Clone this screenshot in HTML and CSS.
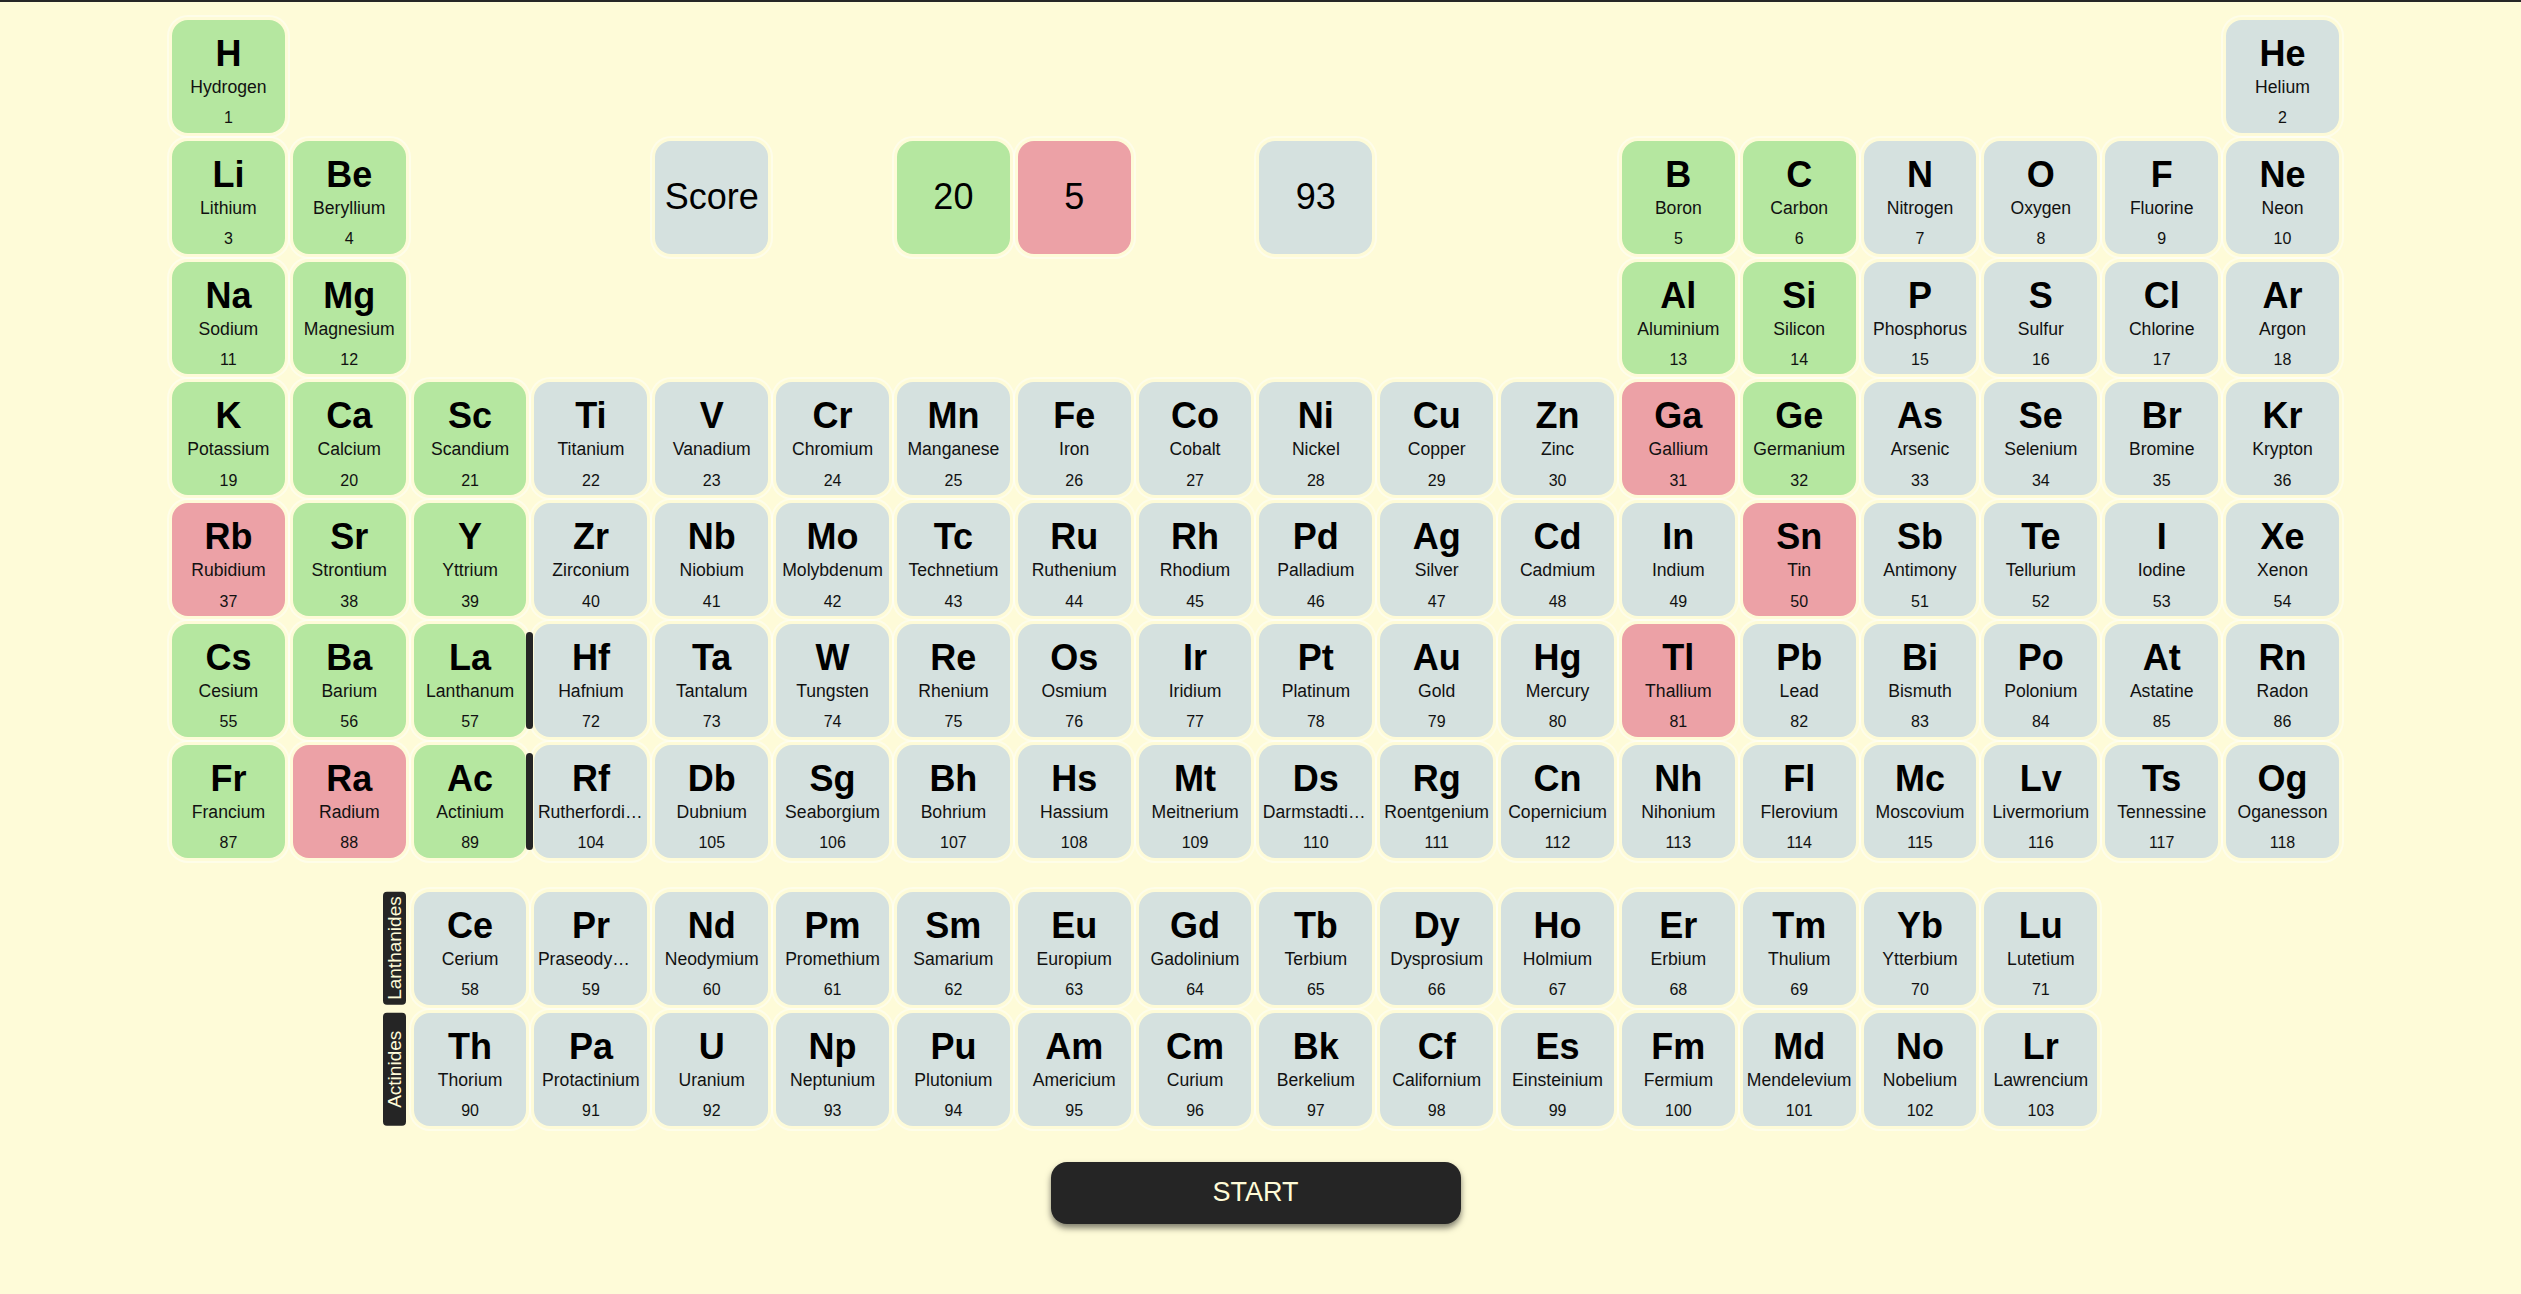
FILE: index.html
```html
<!DOCTYPE html>
<html lang="en">
<head>
<meta charset="utf-8">
<title>Periodic Table Quiz</title>
<link rel="stylesheet" href="styles.css">
</head>
<body>
<div class="topline"></div>
<main class="page">
  <section class="table main-table">
    <div class="cell g"><b class="sym">H</b><span class="name">Hydrogen</span><span class="num">1</span></div>
    <div class="cell x c18"><b class="sym">He</b><span class="name">Helium</span><span class="num">2</span></div>

    <div class="cell g"><b class="sym">Li</b><span class="name">Lithium</span><span class="num">3</span></div>
    <div class="cell g"><b class="sym">Be</b><span class="name">Beryllium</span><span class="num">4</span></div>
    <div class="cell x score c5">Score</div>
    <div class="cell g score c7">20</div>
    <div class="cell r score">5</div>
    <div class="cell x score c10">93</div>
    <div class="cell g c13"><b class="sym">B</b><span class="name">Boron</span><span class="num">5</span></div>
    <div class="cell g"><b class="sym">C</b><span class="name">Carbon</span><span class="num">6</span></div>
    <div class="cell x"><b class="sym">N</b><span class="name">Nitrogen</span><span class="num">7</span></div>
    <div class="cell x"><b class="sym">O</b><span class="name">Oxygen</span><span class="num">8</span></div>
    <div class="cell x"><b class="sym">F</b><span class="name">Fluorine</span><span class="num">9</span></div>
    <div class="cell x"><b class="sym">Ne</b><span class="name">Neon</span><span class="num">10</span></div>

    <div class="cell g"><b class="sym">Na</b><span class="name">Sodium</span><span class="num">11</span></div>
    <div class="cell g"><b class="sym">Mg</b><span class="name">Magnesium</span><span class="num">12</span></div>
    <div class="cell g c13"><b class="sym">Al</b><span class="name">Aluminium</span><span class="num">13</span></div>
    <div class="cell g"><b class="sym">Si</b><span class="name">Silicon</span><span class="num">14</span></div>
    <div class="cell x"><b class="sym">P</b><span class="name">Phosphorus</span><span class="num">15</span></div>
    <div class="cell x"><b class="sym">S</b><span class="name">Sulfur</span><span class="num">16</span></div>
    <div class="cell x"><b class="sym">Cl</b><span class="name">Chlorine</span><span class="num">17</span></div>
    <div class="cell x"><b class="sym">Ar</b><span class="name">Argon</span><span class="num">18</span></div>

    <div class="cell g"><b class="sym">K</b><span class="name">Potassium</span><span class="num">19</span></div>
    <div class="cell g"><b class="sym">Ca</b><span class="name">Calcium</span><span class="num">20</span></div>
    <div class="cell g"><b class="sym">Sc</b><span class="name">Scandium</span><span class="num">21</span></div>
    <div class="cell x"><b class="sym">Ti</b><span class="name">Titanium</span><span class="num">22</span></div>
    <div class="cell x"><b class="sym">V</b><span class="name">Vanadium</span><span class="num">23</span></div>
    <div class="cell x"><b class="sym">Cr</b><span class="name">Chromium</span><span class="num">24</span></div>
    <div class="cell x"><b class="sym">Mn</b><span class="name">Manganese</span><span class="num">25</span></div>
    <div class="cell x"><b class="sym">Fe</b><span class="name">Iron</span><span class="num">26</span></div>
    <div class="cell x"><b class="sym">Co</b><span class="name">Cobalt</span><span class="num">27</span></div>
    <div class="cell x"><b class="sym">Ni</b><span class="name">Nickel</span><span class="num">28</span></div>
    <div class="cell x"><b class="sym">Cu</b><span class="name">Copper</span><span class="num">29</span></div>
    <div class="cell x"><b class="sym">Zn</b><span class="name">Zinc</span><span class="num">30</span></div>
    <div class="cell r"><b class="sym">Ga</b><span class="name">Gallium</span><span class="num">31</span></div>
    <div class="cell g"><b class="sym">Ge</b><span class="name">Germanium</span><span class="num">32</span></div>
    <div class="cell x"><b class="sym">As</b><span class="name">Arsenic</span><span class="num">33</span></div>
    <div class="cell x"><b class="sym">Se</b><span class="name">Selenium</span><span class="num">34</span></div>
    <div class="cell x"><b class="sym">Br</b><span class="name">Bromine</span><span class="num">35</span></div>
    <div class="cell x"><b class="sym">Kr</b><span class="name">Krypton</span><span class="num">36</span></div>

    <div class="cell r"><b class="sym">Rb</b><span class="name">Rubidium</span><span class="num">37</span></div>
    <div class="cell g"><b class="sym">Sr</b><span class="name">Strontium</span><span class="num">38</span></div>
    <div class="cell g"><b class="sym">Y</b><span class="name">Yttrium</span><span class="num">39</span></div>
    <div class="cell x"><b class="sym">Zr</b><span class="name">Zirconium</span><span class="num">40</span></div>
    <div class="cell x"><b class="sym">Nb</b><span class="name">Niobium</span><span class="num">41</span></div>
    <div class="cell x"><b class="sym">Mo</b><span class="name">Molybdenum</span><span class="num">42</span></div>
    <div class="cell x"><b class="sym">Tc</b><span class="name">Technetium</span><span class="num">43</span></div>
    <div class="cell x"><b class="sym">Ru</b><span class="name">Ruthenium</span><span class="num">44</span></div>
    <div class="cell x"><b class="sym">Rh</b><span class="name">Rhodium</span><span class="num">45</span></div>
    <div class="cell x"><b class="sym">Pd</b><span class="name">Palladium</span><span class="num">46</span></div>
    <div class="cell x"><b class="sym">Ag</b><span class="name">Silver</span><span class="num">47</span></div>
    <div class="cell x"><b class="sym">Cd</b><span class="name">Cadmium</span><span class="num">48</span></div>
    <div class="cell x"><b class="sym">In</b><span class="name">Indium</span><span class="num">49</span></div>
    <div class="cell r"><b class="sym">Sn</b><span class="name">Tin</span><span class="num">50</span></div>
    <div class="cell x"><b class="sym">Sb</b><span class="name">Antimony</span><span class="num">51</span></div>
    <div class="cell x"><b class="sym">Te</b><span class="name">Tellurium</span><span class="num">52</span></div>
    <div class="cell x"><b class="sym">I</b><span class="name">Iodine</span><span class="num">53</span></div>
    <div class="cell x"><b class="sym">Xe</b><span class="name">Xenon</span><span class="num">54</span></div>

    <div class="cell g"><b class="sym">Cs</b><span class="name">Cesium</span><span class="num">55</span></div>
    <div class="cell g"><b class="sym">Ba</b><span class="name">Barium</span><span class="num">56</span></div>
    <div class="cell g"><b class="sym">La</b><span class="name">Lanthanum</span><span class="num">57</span></div>
    <div class="cell x bar"><b class="sym">Hf</b><span class="name">Hafnium</span><span class="num">72</span></div>
    <div class="cell x"><b class="sym">Ta</b><span class="name">Tantalum</span><span class="num">73</span></div>
    <div class="cell x"><b class="sym">W</b><span class="name">Tungsten</span><span class="num">74</span></div>
    <div class="cell x"><b class="sym">Re</b><span class="name">Rhenium</span><span class="num">75</span></div>
    <div class="cell x"><b class="sym">Os</b><span class="name">Osmium</span><span class="num">76</span></div>
    <div class="cell x"><b class="sym">Ir</b><span class="name">Iridium</span><span class="num">77</span></div>
    <div class="cell x"><b class="sym">Pt</b><span class="name">Platinum</span><span class="num">78</span></div>
    <div class="cell x"><b class="sym">Au</b><span class="name">Gold</span><span class="num">79</span></div>
    <div class="cell x"><b class="sym">Hg</b><span class="name">Mercury</span><span class="num">80</span></div>
    <div class="cell r"><b class="sym">Tl</b><span class="name">Thallium</span><span class="num">81</span></div>
    <div class="cell x"><b class="sym">Pb</b><span class="name">Lead</span><span class="num">82</span></div>
    <div class="cell x"><b class="sym">Bi</b><span class="name">Bismuth</span><span class="num">83</span></div>
    <div class="cell x"><b class="sym">Po</b><span class="name">Polonium</span><span class="num">84</span></div>
    <div class="cell x"><b class="sym">At</b><span class="name">Astatine</span><span class="num">85</span></div>
    <div class="cell x"><b class="sym">Rn</b><span class="name">Radon</span><span class="num">86</span></div>

    <div class="cell g"><b class="sym">Fr</b><span class="name">Francium</span><span class="num">87</span></div>
    <div class="cell r"><b class="sym">Ra</b><span class="name">Radium</span><span class="num">88</span></div>
    <div class="cell g"><b class="sym">Ac</b><span class="name">Actinium</span><span class="num">89</span></div>
    <div class="cell x bar"><b class="sym">Rf</b><span class="name">Rutherfordium</span><span class="num">104</span></div>
    <div class="cell x"><b class="sym">Db</b><span class="name">Dubnium</span><span class="num">105</span></div>
    <div class="cell x"><b class="sym">Sg</b><span class="name">Seaborgium</span><span class="num">106</span></div>
    <div class="cell x"><b class="sym">Bh</b><span class="name">Bohrium</span><span class="num">107</span></div>
    <div class="cell x"><b class="sym">Hs</b><span class="name">Hassium</span><span class="num">108</span></div>
    <div class="cell x"><b class="sym">Mt</b><span class="name">Meitnerium</span><span class="num">109</span></div>
    <div class="cell x"><b class="sym">Ds</b><span class="name">Darmstadtium</span><span class="num">110</span></div>
    <div class="cell x"><b class="sym">Rg</b><span class="name">Roentgenium</span><span class="num">111</span></div>
    <div class="cell x"><b class="sym">Cn</b><span class="name">Copernicium</span><span class="num">112</span></div>
    <div class="cell x"><b class="sym">Nh</b><span class="name">Nihonium</span><span class="num">113</span></div>
    <div class="cell x"><b class="sym">Fl</b><span class="name">Flerovium</span><span class="num">114</span></div>
    <div class="cell x"><b class="sym">Mc</b><span class="name">Moscovium</span><span class="num">115</span></div>
    <div class="cell x"><b class="sym">Lv</b><span class="name">Livermorium</span><span class="num">116</span></div>
    <div class="cell x"><b class="sym">Ts</b><span class="name">Tennessine</span><span class="num">117</span></div>
    <div class="cell x"><b class="sym">Og</b><span class="name">Oganesson</span><span class="num">118</span></div>
  </section>

  <section class="table f-table">
    <div class="flabel c2">Lanthanides</div>
    <div class="cell x"><b class="sym">Ce</b><span class="name">Cerium</span><span class="num">58</span></div>
    <div class="cell x"><b class="sym">Pr</b><span class="name">Praseodymium</span><span class="num">59</span></div>
    <div class="cell x"><b class="sym">Nd</b><span class="name">Neodymium</span><span class="num">60</span></div>
    <div class="cell x"><b class="sym">Pm</b><span class="name">Promethium</span><span class="num">61</span></div>
    <div class="cell x"><b class="sym">Sm</b><span class="name">Samarium</span><span class="num">62</span></div>
    <div class="cell x"><b class="sym">Eu</b><span class="name">Europium</span><span class="num">63</span></div>
    <div class="cell x"><b class="sym">Gd</b><span class="name">Gadolinium</span><span class="num">64</span></div>
    <div class="cell x"><b class="sym">Tb</b><span class="name">Terbium</span><span class="num">65</span></div>
    <div class="cell x"><b class="sym">Dy</b><span class="name">Dysprosium</span><span class="num">66</span></div>
    <div class="cell x"><b class="sym">Ho</b><span class="name">Holmium</span><span class="num">67</span></div>
    <div class="cell x"><b class="sym">Er</b><span class="name">Erbium</span><span class="num">68</span></div>
    <div class="cell x"><b class="sym">Tm</b><span class="name">Thulium</span><span class="num">69</span></div>
    <div class="cell x"><b class="sym">Yb</b><span class="name">Ytterbium</span><span class="num">70</span></div>
    <div class="cell x"><b class="sym">Lu</b><span class="name">Lutetium</span><span class="num">71</span></div>

    <div class="flabel c2">Actinides</div>
    <div class="cell x"><b class="sym">Th</b><span class="name">Thorium</span><span class="num">90</span></div>
    <div class="cell x"><b class="sym">Pa</b><span class="name">Protactinium</span><span class="num">91</span></div>
    <div class="cell x"><b class="sym">U</b><span class="name">Uranium</span><span class="num">92</span></div>
    <div class="cell x"><b class="sym">Np</b><span class="name">Neptunium</span><span class="num">93</span></div>
    <div class="cell x"><b class="sym">Pu</b><span class="name">Plutonium</span><span class="num">94</span></div>
    <div class="cell x"><b class="sym">Am</b><span class="name">Americium</span><span class="num">95</span></div>
    <div class="cell x"><b class="sym">Cm</b><span class="name">Curium</span><span class="num">96</span></div>
    <div class="cell x"><b class="sym">Bk</b><span class="name">Berkelium</span><span class="num">97</span></div>
    <div class="cell x"><b class="sym">Cf</b><span class="name">Californium</span><span class="num">98</span></div>
    <div class="cell x"><b class="sym">Es</b><span class="name">Einsteinium</span><span class="num">99</span></div>
    <div class="cell x"><b class="sym">Fm</b><span class="name">Fermium</span><span class="num">100</span></div>
    <div class="cell x"><b class="sym">Md</b><span class="name">Mendelevium</span><span class="num">101</span></div>
    <div class="cell x"><b class="sym">No</b><span class="name">Nobelium</span><span class="num">102</span></div>
    <div class="cell x"><b class="sym">Lr</b><span class="name">Lawrencium</span><span class="num">103</span></div>
  </section>

  <button class="start" type="button">START</button>
</main>
</body>
</html>
```

FILE: styles.css
```css
html, body {
  margin: 0;
  padding: 0;
  background: #fefbd8;
}

body {
  font-family: "Liberation Sans", Arial, sans-serif;
  color: #000;
}

.topline {
  height: 2px;
  background: #262626;
}

.page {
  width: 2175px;
  margin: 14px 0 0 168px;
  padding-bottom: 40px;
}

.table {
  display: grid;
  grid-template-columns: repeat(18, 120.83px);
  grid-auto-rows: 120.83px;
}

.f-table {
  margin-top: 26.2px;
}

.c2 { grid-column-start: 2; }
.c5 { grid-column-start: 5; }
.c7 { grid-column-start: 7; }
.c10 { grid-column-start: 10; }
.c13 { grid-column-start: 13; }
.c18 { grid-column-start: 18; }

.cell {
  position: relative;
  box-sizing: border-box;
  border: 4px solid transparent;
  border-radius: 20px;
  background-clip: padding-box;
  box-shadow: 0 0 0 1px rgba(255, 255, 255, 0.45);
  display: flex;
  flex-direction: column;
  align-items: center;
  padding-top: 16px;
  min-width: 0;
}

.g { background-color: #b5e7a0; }
.r { background-color: #eca1a6; }
.x { background-color: #d5e1df; }

.sym {
  display: block;
  font-weight: 700;
  font-size: 36px;
  line-height: 36px;
  color: #000;
}

.name {
  display: block;
  box-sizing: border-box;
  width: 100%;
  padding: 0 3.4px;
  margin-top: 5px;
  font-size: 17.6px;
  line-height: 20.7px;
  text-align: center;
  white-space: nowrap;
  overflow: hidden;
  text-overflow: ellipsis;
  color: #111;
}

.num {
  display: block;
  margin-top: 11.5px;
  font-size: 16px;
  line-height: 18.4px;
  color: #111;
}

.score {
  padding-top: 0;
  justify-content: center;
  font-size: 36px;
  line-height: 40px;
  color: #000;
}

.bar::before {
  content: "";
  position: absolute;
  left: -8px;
  top: 8px;
  bottom: 8px;
  width: 7px;
  border-radius: 4px;
  background: #252525;
}

.flabel {
  justify-self: end;
  width: 23px;
  margin: 4px 4px 4px 0;
  background: #252525;
  border-radius: 4px;
  color: #fefbd8;
  font-size: 19px;
  writing-mode: vertical-rl;
  transform: rotate(180deg);
  display: flex;
  align-items: center;
  justify-content: center;
  white-space: nowrap;
}

.start {
  display: block;
  margin: 32.3px auto 0;
  width: 410px;
  height: 62px;
  border: none;
  border-radius: 16px;
  background: #252525;
  color: #fefbd8;
  font-family: "Liberation Sans", Arial, sans-serif;
  font-size: 27px;
  box-shadow: 0 4px 6px rgba(0, 0, 0, 0.5);
  cursor: pointer;
}
```
